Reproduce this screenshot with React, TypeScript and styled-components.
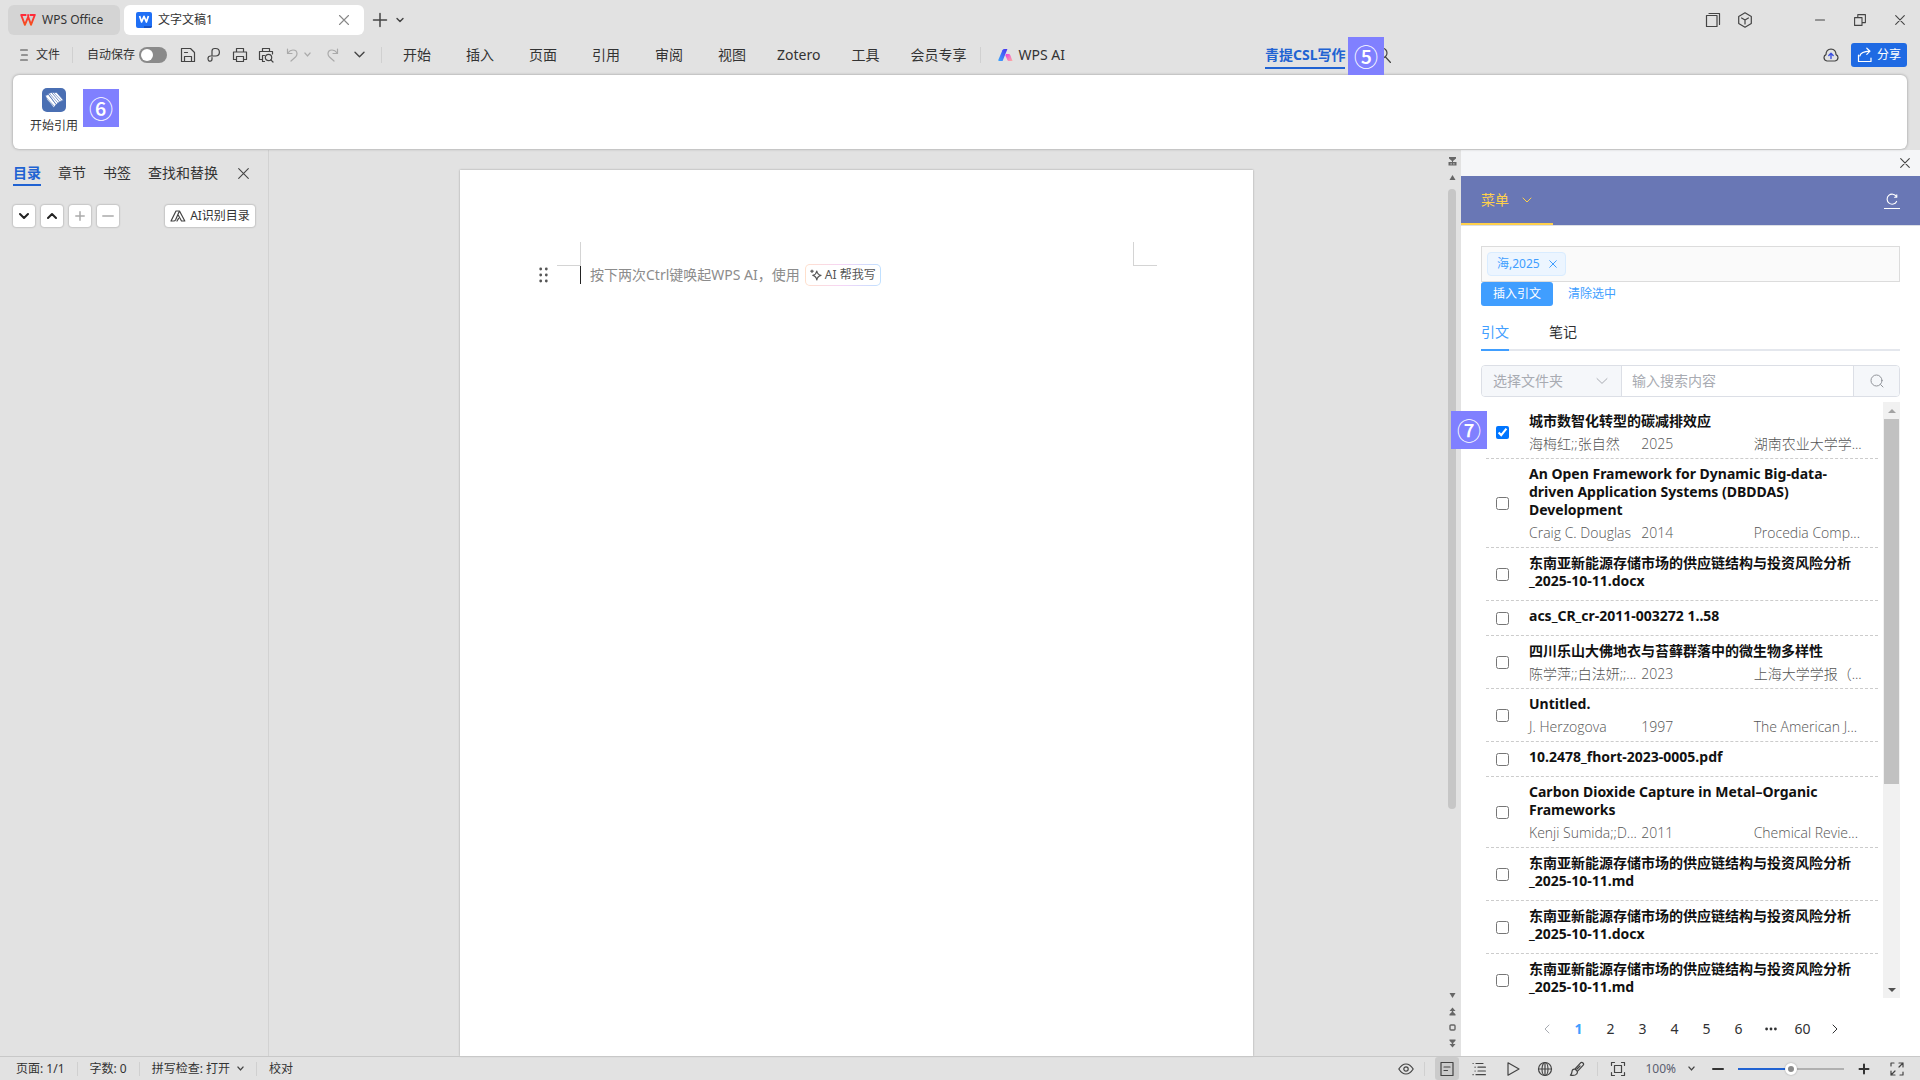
import React from "react";
import styled, { createGlobalStyle, css } from "styled-components";

const GlobalStyle = createGlobalStyle`
  *, *::before, *::after { box-sizing: border-box; }
  body {
    margin: 0;
    background: #e2e2e2;
    color: #333;
    font-family: "Noto Sans", "Noto Sans CJK SC", sans-serif;
    font-size: 14px;
    line-height: 20px;
  }
  button, input, select { font: inherit; color: inherit; }
  button { padding: 0; border: 0; background: none; cursor: pointer; }
  h1, p, ul { margin: 0; padding: 0; }
  svg { display: block; flex: none; }
`;

/* ---------- icons ---------- */

type IconProps = {
  children: React.ReactNode;
  w?: number;
  h?: number;
  color?: string;
  weight?: number;
};

const Icon = ({ children, w = 16, h = w, color = "#444", weight = 1.2 }: IconProps) => (
  <svg
    width={w}
    height={h}
    viewBox={`0 0 ${w} ${h}`}
    fill="none"
    stroke={color}
    strokeWidth={weight}
    strokeLinecap="round"
    strokeLinejoin="round"
    aria-hidden="true"
  >
    {children}
  </svg>
);

const Chevron = ({ w = 8, color = "#444", weight = 1.4, up = false }: { w?: number; color?: string; weight?: number; up?: boolean }) => (
  <Icon w={w} h={w} color={color} weight={weight}>
    <path d={up ? `M1 ${w * 0.7}L${w / 2} ${w * 0.3}L${w - 1} ${w * 0.7}` : `M1 ${w * 0.3}L${w / 2} ${w * 0.7}L${w - 1} ${w * 0.3}`} />
  </Icon>
);

const Cross = ({ w = 10, color = "#444", weight = 1.1 }: { w?: number; color?: string; weight?: number }) => (
  <Icon w={w} color={color} weight={weight}>
    <path d={`M.7 .7L${w - 0.7} ${w - 0.7}M${w - 0.7} .7L.7 ${w - 0.7}`} />
  </Icon>
);

const WpsLogo = () => (
  <svg width="16" height="12" viewBox="0 0 16 12" aria-hidden="true">
    <defs>
      <linearGradient id="wpsRed" x1="0" y1="0" x2="0" y2="1">
        <stop offset="0" stopColor="#ff2a3a" />
        <stop offset="1" stopColor="#f5521d" />
      </linearGradient>
    </defs>
    <path
      fill="none"
      stroke="url(#wpsRed)"
      strokeWidth="1.9"
      strokeLinejoin="round"
      d="M6.4 1H1.2L4.9 10.8L8.2 2.9L11 10.8L14.8 1H9.6M7.2 1.2H9"
    />
  </svg>
);

const WriterLogo = () => (
  <svg width="16" height="16" viewBox="0 0 16 16" aria-hidden="true">
    <rect width="16" height="16" rx="2" fill="#1f6ff5" />
    <path d="M8 16V14H16A2 2 0 0 1 14 16Z" fill="#1450c4" />
    <path d="M3.6 4L5.6 10L8 4.4L10.4 10L12.4 4" fill="none" stroke="#fff" strokeWidth="1.7" strokeLinejoin="round" />
  </svg>
);

const BooksLogo = () => (
  <svg width="24" height="24" viewBox="0 0 24 24" aria-hidden="true">
    <rect width="24" height="24" rx="5" fill="#4a6fb3" />
    <g fill="#fff" stroke="#4a6fb3" strokeWidth=".7" strokeLinejoin="round">
      <path d="M3.4 7.6L6.4 6.4L14.2 16.6L11.8 19.6L5 11.6Z" />
      <path d="M6.2 5.8L10 4.2L18 13.6L14.2 16.6Z" />
      <path d="M9.6 4.4L14.8 4.6L21.4 12.2L17.6 14Z" />
    </g>
    <path d="M4.6 9.8L12 18M8 6L16 15.2M12 5L19.6 13" stroke="#4a6fb3" strokeWidth=".6" />
  </svg>
);

const AiLogo = () => (
  <svg width="15" height="12" viewBox="0 0 15 12" aria-hidden="true">
    <defs>
      <linearGradient id="aiBlue" x1="0" y1="1" x2="1" y2="0">
        <stop offset="0" stopColor="#38a8ff" />
        <stop offset="1" stopColor="#4a2ef0" />
      </linearGradient>
      <linearGradient id="aiPink" x1="0" y1="0" x2="1" y2="1">
        <stop offset="0" stopColor="#e83ae0" />
        <stop offset="1" stopColor="#ffb0a0" />
      </linearGradient>
    </defs>
    <path d="M4.4 1.2Q5 0 6.4 0H9.4L4.6 12H1Q0 12 .4 10.8Z" fill="url(#aiBlue)" />
    <path d="M8 5H10.8Q11.8 5 12.2 6L14.6 12H10.8Q9.8 12 9.4 11L7.4 6.4Z" fill="url(#aiPink)" />
  </svg>
);

/* ---------- shared pieces ---------- */

const IconButton = styled.button<{ $w?: number; $h?: number; $on?: boolean }>`
  display: flex;
  align-items: center;
  justify-content: center;
  width: ${(p) => p.$w ?? 16}px;
  height: ${(p) => p.$h ?? 20}px;
  flex: none;
  border-radius: 3px;
  background: ${(p) => (p.$on ? "#cbcbcb" : "none")};
`;

const Divider = styled.span<{ $h?: number }>`
  width: 1px;
  height: ${(p) => p.$h ?? 16}px;
  flex: none;
  background: #d0d0d0;
`;

const Badge = styled.span<{ $left: number; $top: number }>`
  position: absolute;
  left: ${(p) => p.$left}px;
  top: ${(p) => p.$top}px;
  z-index: 5;
  display: flex;
  align-items: center;
  justify-content: center;
  width: 36px;
  height: 38px;
  background: #8080ff;
  color: #fff;
  font-family: "Noto Sans CJK SC", sans-serif;
  font-size: 24px;
  font-weight: 500;
  line-height: 38px;
`;

const Shell = styled.div`
  display: flex;
  flex-direction: column;
  height: 100vh;
  overflow: hidden;
`;

/* ---------- title bar ---------- */

const TitleBar = styled.header`
  display: flex;
  align-items: center;
  height: 36px;
  padding: 5px 12px 1px 8px;
  font-size: 12px;
`;

const FileTab = styled.button<{ $active?: boolean; $w: number }>`
  display: flex;
  align-items: center;
  gap: 6px;
  width: ${(p) => p.$w}px;
  height: 30px;
  margin-right: 4px;
  padding: 0 12px;
  border-radius: 6px;
  background: ${(p) => (p.$active ? "#fff" : "#d4d4d4")};
  color: #333;
`;

const FileName = styled.span`
  flex: 1;
  text-align: left;
  white-space: nowrap;
`;

const NewTab = styled.div`
  display: flex;
  align-items: center;
  gap: 8px;
  margin-left: 4px;
`;

const WindowTools = styled.div`
  display: flex;
  align-items: center;
  gap: 16px;
  margin-left: auto;
`;

const WindowButtons = styled.div`
  display: flex;
  gap: 24px;
  margin-left: 59px;
`;

/* ---------- menu bar ---------- */

const MenuBar = styled.div`
  display: flex;
  align-items: center;
  height: 39px;
  padding: 0 13px 2px 20px;
  font-size: 12px;
`;

const FileMenu = styled.button`
  display: flex;
  align-items: center;
  gap: 8px;
  margin-right: 12px;
`;

const AutoSave = styled.label`
  display: flex;
  align-items: center;
  gap: 4px;
  margin: 0 13px 0 14px;
`;

const Toggle = styled.input`
  appearance: none;
  display: flex;
  align-items: center;
  width: 28px;
  height: 16px;
  margin: 0;
  padding: 0 2px;
  border-radius: 8px;
  background: #8a8a8a;

  &::before {
    content: "";
    width: 12px;
    height: 12px;
    border-radius: 6px;
    background: #fff;
  }
`;

const QuickTools = styled.div`
  display: flex;
  align-items: center;
  gap: 10px;
  margin-right: 14px;
`;

const UndoGroup = styled.div`
  display: flex;
  align-items: center;
  gap: 4px;
  margin-right: 4px;
`;

const RibbonTabs = styled.nav<{ $gap: number; $before: number; $after?: number }>`
  display: flex;
  align-items: center;
  gap: ${(p) => p.$gap}px;
  margin-left: ${(p) => p.$before}px;
  margin-right: ${(p) => p.$after ?? 0}px;
`;

const RibbonTab = styled.button<{ $active?: boolean }>`
  display: flex;
  align-items: center;
  gap: 5px;
  height: 28px;
  border-bottom: 2px solid transparent;
  border-top: 2px solid transparent;
  font-size: 14px;
  white-space: nowrap;
  ${(p) =>
    p.$active &&
    css`
      border-bottom-color: #2163d2;
      color: #2163d2;
      font-weight: 700;
    `}
`;

const AddinTabs = styled.div`
  position: relative;
  display: flex;
  align-items: center;
  gap: 30px;
  margin-left: 200px;
`;

const ShareGroup = styled.div`
  display: flex;
  align-items: center;
  gap: 12px;
  margin-left: auto;
`;

const ShareButton = styled.button`
  display: flex;
  align-items: center;
  gap: 4px;
  height: 24px;
  padding: 0 6px;
  border-radius: 3px;
  background: #1f6ae3;
  color: #fff;
`;

/* ---------- ribbon ---------- */

const Ribbon = styled.section`
  position: relative;
  z-index: 2;
  display: flex;
  align-items: flex-start;
  flex: none;
  height: 74px;
  margin: 0 13px 1px;
  padding: 13px 17px;
  border-radius: 6px;
  background: #fff;
  box-shadow: 0 0 3px rgba(0, 0, 0, 0.35);
`;

const RibbonCommand = styled.button`
  display: flex;
  flex-direction: column;
  align-items: center;
  gap: 5px;
  font-size: 12px;
  line-height: 18px;
`;

/* ---------- body ---------- */

const Body = styled.div`
  display: flex;
  flex: 1;
  min-height: 0;
`;

const Outline = styled.aside`
  flex: none;
  width: 269px;
  padding: 13px 13px 0;
  border-right: 1px solid #d2d2d2;
`;

const OutlineTabs = styled.div`
  display: flex;
  align-items: flex-start;
  gap: 17px;
`;

const OutlineTab = styled.button<{ $active?: boolean }>`
  padding-bottom: 1px;
  border-bottom: 2px solid ${(p) => (p.$active ? "#2163d2" : "transparent")};
  color: ${(p) => (p.$active ? "#2163d2" : "#333")};
  font-weight: ${(p) => (p.$active ? 700 : 400)};
`;

const OutlineTools = styled.div`
  display: flex;
  gap: 6px;
  margin-top: 19px;
`;

const ToolBox = styled.button`
  display: flex;
  align-items: center;
  justify-content: center;
  width: 22px;
  height: 22px;
  border-radius: 3px;
  background: #fff;
  box-shadow: 0 0 2px rgba(0, 0, 0, 0.4);
`;

const DetectButton = styled(ToolBox)`
  gap: 4px;
  width: 90px;
  margin-left: auto;
  font-size: 12px;
`;

const Canvas = styled.main`
  display: flex;
  justify-content: center;
  flex: 1;
  min-width: 0;
  padding: 20px 0 0 2px;
`;

const Paper = styled.article`
  flex: none;
  width: 793px;
  padding-top: 72px;
  background: #fff;
  box-shadow: 0 0 2px rgba(0, 0, 0, 0.3);
`;

const Margins = styled.div`
  display: flex;
  justify-content: space-between;
  padding: 0 96px 0 97px;
`;

const Corner = styled.span<{ $side: "left" | "right" }>`
  width: 24px;
  height: 24px;
  border-bottom: 1px solid #d4d4d4;
  border-${(p) => (p.$side === "left" ? "right" : "left")}: 1px solid #d4d4d4;
`;

const Line = styled.div`
  display: flex;
  align-items: center;
  height: 18px;
  padding-left: 79px;
  color: #8c8c8c;
  white-space: nowrap;
`;

const Caret = styled.span`
  width: 1px;
  height: 18px;
  margin: 0 9px 0 32px;
  background: #222;
`;

const WriteForMe = styled.button`
  display: flex;
  align-items: center;
  gap: 3px;
  height: 22px;
  margin-left: 5px;
  padding: 0 4px;
  border: 1px solid transparent;
  border-radius: 5px;
  background: linear-gradient(#fff, #fff) padding-box, linear-gradient(90deg, #ffe0cc, #f5d5f7, #bfe0ff) border-box;
  color: #555;
  font-size: 12px;
`;

const DocScroll = styled.div`
  display: flex;
  flex-direction: column;
  align-items: center;
  flex: none;
  width: 19px;
  padding: 7px 0 8px 1px;
`;

const DocTrack = styled.div`
  flex: 1;
  width: 8px;
  margin: 7px 0;
`;

const DocThumb = styled.div`
  height: 78%;
  border-radius: 4px;
  background: #c6c6c6;
`;

const DocSteps = styled.div`
  display: flex;
  flex-direction: column;
  align-items: center;
  gap: 7px;
`;

/* ---------- citation panel ---------- */

const Panel = styled.aside`
  position: relative;
  display: flex;
  flex-direction: column;
  flex: none;
  width: 459px;
  background: #fff;
`;

const PanelTop = styled.div`
  display: flex;
  align-items: center;
  justify-content: flex-end;
  height: 26px;
  padding: 0 7px;
  background: #f5f6f8;
`;

const PanelHeader = styled.div`
  display: flex;
  align-items: center;
  justify-content: space-between;
  height: 50px;
  padding-right: 20px;
  border-bottom: 1px solid #dcdfe6;
  background: #6977b5;
`;

const PanelMenu = styled.button`
  display: flex;
  align-items: center;
  gap: 13px;
  width: 92px;
  height: 49px;
  padding: 0 20px;
  border-bottom: 2px solid #ffd04b;
  color: #ffd04b;
`;

const RefreshLink = styled.a`
  display: flex;
  justify-content: center;
  width: 16px;
  padding-bottom: 3px;
  border-bottom: 1px solid #fff;
`;

const PanelContent = styled.div`
  display: flex;
  flex-direction: column;
  flex: 1;
  min-height: 0;
  padding: 20px 20px 0;
`;

const TagBox = styled.div`
  flex: none;
  display: flex;
  height: 36px;
  padding: 5px;
  border: 1px solid #dcdcdc;
  background: #fafafa;
`;

const Tag = styled.span`
  display: flex;
  align-items: center;
  gap: 9px;
  height: 24px;
  padding: 0 8px 0 9px;
  border: 1px solid #d9ecff;
  border-radius: 4px;
  background: #ecf5ff;
  color: #409eff;
  font-size: 12px;
`;

const Actions = styled.div`
  display: flex;
  align-items: center;
  gap: 15px;
  font-size: 12px;
`;

const PrimaryButton = styled.button`
  height: 24px;
  padding: 0 12px;
  border-radius: 3px;
  background: #409eff;
  color: #fff;
`;

const TextButton = styled.button`
  color: #409eff;
`;

const PanelTabs = styled.div`
  display: flex;
  gap: 40px;
  height: 39px;
  margin: 6px 0 14px;
  box-shadow: inset 0 -2px #e4e7ed;
`;

const PanelTab = styled.button<{ $active?: boolean }>`
  padding-top: 2px;
  border-bottom: 2px solid ${(p) => (p.$active ? "#409eff" : "transparent")};
  color: ${(p) => (p.$active ? "#409eff" : "#303133")};
`;

const SearchRow = styled.form`
  flex: none;
  display: flex;
  height: 32px;
  border: 1px solid #dcdfe6;
  border-radius: 4px;
  overflow: hidden;
`;

const FolderField = styled.label`
  position: relative;
  width: 140px;
  border-right: 1px solid #dcdfe6;
  background: #f5f7fa;

  svg {
    position: absolute;
    right: 13px;
    top: 9px;
    pointer-events: none;
  }
`;

const FolderSelect = styled.select`
  appearance: none;
  width: 100%;
  height: 30px;
  padding: 0 11px;
  border: 0;
  background: none;
  color: #a8abb2;
`;

const SearchInput = styled.input`
  flex: 1;
  min-width: 0;
  padding: 0 10px;
  border: 0;
  outline: 0;

  &::placeholder {
    color: #a8abb2;
  }
`;

const SearchButton = styled.button`
  display: flex;
  align-items: center;
  justify-content: center;
  width: 46px;
  border-left: 1px solid #dcdfe6;
  background: #f5f7fa;
`;

const ListArea = styled.div`
  display: flex;
  flex: 1;
  min-height: 0;
  margin-top: 5px;
`;

const RefList = styled.ul`
  flex: 1;
  min-width: 0;
  padding: 4px 5px 0;
  overflow: hidden;
  list-style: none;
`;

const RefItem = styled.li`
  border-bottom: 1px dashed #ccc;
`;

const RefLabel = styled.label`
  display: flex;
  align-items: center;
  gap: 20px;
  padding: 6px 12px 5px 10px;
`;

const RefCheck = styled.input`
  flex: none;
  width: 13px;
  height: 13px;
  margin: 0;
  accent-color: #0075ff;
`;

const RefText = styled.span`
  flex: 1;
  min-width: 0;
`;

const RefTitle = styled.span`
  display: block;
  margin-bottom: 5px;
  color: #111;
  font-weight: 700;
  line-height: 18px;
`;

const RefMeta = styled.span`
  display: grid;
  grid-template-columns: repeat(3, 1fr);
  color: #555;
  font-family: "Open Sans", "Noto Sans CJK SC", sans-serif;
  font-weight: 300;
  line-height: 18px;
`;

const RefCell = styled.span`
  white-space: nowrap;
`;

const Scrollbar = styled.div`
  display: flex;
  flex-direction: column;
  width: 17px;
  background: #f1f1f1;
`;

const ScrollEnd = styled.button`
  display: flex;
  align-items: center;
  justify-content: center;
  height: 17px;
`;

const ScrollTrack = styled.div`
  flex: 1;
  padding: 0 1px;
`;

const ScrollThumb = styled.div`
  height: 65%;
  background: #c1c1c1;
`;

const Pager = styled.nav`
  display: flex;
  justify-content: center;
  align-items: center;
  height: 58px;
  padding-top: 4px;
`;

const PageButton = styled.button<{ $active?: boolean }>`
  display: flex;
  align-items: center;
  justify-content: center;
  width: 32px;
  height: 32px;
  color: ${(p) => (p.$active ? "#409eff" : "#303133")};
  font-weight: ${(p) => (p.$active ? 700 : 400)};
`;

/* ---------- status bar ---------- */

const StatusBar = styled.footer`
  display: flex;
  align-items: center;
  flex: none;
  height: 24px;
  padding: 0 16px;
  border-top: 1px solid #c8c8c8;
  font-size: 12px;
`;

const StatusGroup = styled.div<{ $gap?: number; $before?: number }>`
  display: flex;
  align-items: center;
  gap: ${(p) => p.$gap ?? 12}px;
  margin-left: ${(p) => p.$before ?? 0}px;
`;

const StatusButton = styled.button`
  display: flex;
  align-items: center;
  gap: 7px;
`;

const ViewTools = styled(StatusGroup)`
  margin-left: auto;
`;

const ZoomButton = styled(StatusButton)`
  gap: 12px;
  margin: 0 17px 0 19px;
  color: #5a6070;
`;

const ZoomRange = styled.input`
  appearance: none;
  width: 106px;
  height: 12px;
  margin: 0 14px;
  background: linear-gradient(90deg, #2163d2 50%, #b0b0b0 50%) center / 100% 2px no-repeat;

  &::-webkit-slider-thumb {
    appearance: none;
    width: 12px;
    height: 12px;
    border: 3px solid #fff;
    border-radius: 6px;
    background: #8a8a8a;
    box-shadow: 0 0 2px rgba(0, 0, 0, 0.3);
  }
`;

/* ---------- data ---------- */

type Reference = { title: string; meta?: [string, string, string]; checked?: boolean };

const references: Reference[] = [
  { title: "城市数智化转型的碳减排效应", meta: ["海梅红;;张自然", "2025", "湖南农业大学学..."], checked: true },
  {
    title: "An Open Framework for Dynamic Big-data-driven Application Systems (DBDDAS) Development",
    meta: ["Craig C. Douglas", "2014", "Procedia Comp..."],
  },
  { title: "东南亚新能源存储市场的供应链结构与投资风险分析_2025-10-11.docx" },
  { title: "acs_CR_cr-2011-003272 1..58" },
  { title: "四川乐山大佛地衣与苔藓群落中的微生物多样性", meta: ["陈学萍;;白法妍;;...", "2023", "上海大学学报（..."] },
  { title: "Untitled.", meta: ["J. Herzogova", "1997", "The American J..."] },
  { title: "10.2478_fhort-2023-0005.pdf" },
  { title: "Carbon Dioxide Capture in Metal–Organic Frameworks", meta: ["Kenji Sumida;;D...", "2011", "Chemical Revie..."] },
  { title: "东南亚新能源存储市场的供应链结构与投资风险分析_2025-10-11.md" },
  { title: "东南亚新能源存储市场的供应链结构与投资风险分析_2025-10-11.docx" },
  { title: "东南亚新能源存储市场的供应链结构与投资风险分析_2025-10-11.md" },
];

const editTabs = ["开始", "插入", "页面", "引用", "审阅", "视图"];
const extraTabs = ["Zotero", "工具", "会员专享"];
const outlineTabs = ["目录", "章节", "书签", "查找和替换"];

const Header = () => (
  <TitleBar>
    <FileTab $w={112}>
      <WpsLogo />
      <FileName>WPS Office</FileName>
    </FileTab>
    <FileTab $w={240} $active>
      <WriterLogo />
      <FileName>文字文稿1</FileName>
      <Icon w={16} color="#888" weight={1.1}>
        <path d="M3.5 3.5L12.5 12.5M12.5 3.5L3.5 12.5" />
      </Icon>
    </FileTab>
    <NewTab>
      <IconButton aria-label="新建">
        <Icon w={16} weight={1.5}>
          <path d="M8 1.5V14.5M1.5 8H14.5" />
        </Icon>
      </IconButton>
      <IconButton $w={8} aria-label="标签列表">
        <Chevron w={8} />
      </IconButton>
    </NewTab>
    <WindowTools>
      <IconButton aria-label="窗口列表">
        <Icon>
          <path d="M1.5 3.5H12V14.5H1.5Z" />
          <path d="M4 1.5H14.5V12.5" />
        </Icon>
      </IconButton>
      <IconButton aria-label="应用">
        <Icon>
          <path d="M8 .8L14.3 4.4V11.6L8 15.2L1.7 11.6V4.4ZM4.6 6L8 8L11.4 6M8 8V12" />
        </Icon>
      </IconButton>
    </WindowTools>
    <WindowButtons>
      <IconButton aria-label="最小化">
        <Icon w={10} weight={1.1}><path d="M.5 5H9.5" /></Icon>
      </IconButton>
      <IconButton aria-label="还原">
        <Icon w={12} weight={1.1}><path d="M.6 3.6H8V11.4H.6ZM3.8 3.6V.6H11.4V8.6H8" /></Icon>
      </IconButton>
      <IconButton aria-label="关闭">
        <Cross />
      </IconButton>
    </WindowButtons>
  </TitleBar>
);

const Menus = () => (
  <MenuBar>
    <FileMenu>
      <Icon w={8} h={12} weight={1.1}>
        <path d="M.6 1H7.4M1.6 6H7.4M.6 11H7.4" />
      </Icon>
      文件
    </FileMenu>
    <Divider />
    <AutoSave>
      自动保存
      <Toggle type="checkbox" />
    </AutoSave>
    <QuickTools>
      <IconButton aria-label="保存">
        <Icon>
          <path d="M1.5 1.5H10.5L14.5 5.5V14.5H1.5ZM4.5 14.2V9.5H11.5V14.2M4.5 5.5H7.5" />
        </Icon>
      </IconButton>
      <IconButton aria-label="输出为PDF">
        <Icon>
          <path d="M6 8V4Q6 1.5 8.6 1.5H9.6Q13.4 1.5 13.4 5.2T9.6 9H4.6Q2 9 2 11.6T4.2 14.2Q6 14.2 6 12V10.6" />
        </Icon>
      </IconButton>
      <IconButton aria-label="打印">
        <Icon>
          <path d="M4.5 5V1.5H11.5V5M4.5 12.5H1.5V5H14.5V12.5H11.5M4.5 9.5H11.5V14.5H4.5Z" />
        </Icon>
      </IconButton>
      <IconButton aria-label="打印预览">
        <Icon>
          <path d="M4.5 4.5V1.5H11.5V4.5M4.5 12.5H1.5V4.5H14.5V7M6.5 14.5H4.5V8.5H6.5" />
          <circle cx="10.5" cy="10.5" r="3.2" />
          <path d="M12.8 12.8L15 15" />
        </Icon>
      </IconButton>
      <UndoGroup>
        <IconButton aria-label="撤销">
          <Icon color="#aaa">
            <path d="M3.5 2V6.5H8M3.8 6Q6 3 9 3Q13 3 13 6.8Q13 8.6 11.5 10L7 14" />
          </Icon>
        </IconButton>
        <Chevron w={7} color="#aaa" />
      </UndoGroup>
      <IconButton aria-label="恢复">
        <Icon color="#aaa">
          <path d="M12.5 2V6.5H8M12.2 6Q10 3 7 3Q3 3 3 6.8Q3 8.6 4.5 10L9 14" />
        </Icon>
      </IconButton>
      <IconButton aria-label="更多">
        <Chevron w={11} />
      </IconButton>
    </QuickTools>
    <Divider />
    <RibbonTabs $gap={35} $before={21}>
      {editTabs.map((name) => (
        <RibbonTab key={name}>{name}</RibbonTab>
      ))}
    </RibbonTabs>
    <RibbonTabs $gap={31} $before={31} $after={14}>
      {extraTabs.map((name) => (
        <RibbonTab key={name}>{name}</RibbonTab>
      ))}
    </RibbonTabs>
    <Divider />
    <RibbonTabs $gap={31} $before={17}>
      <RibbonTab>
        <AiLogo />
        WPS AI
      </RibbonTab>
    </RibbonTabs>
    <AddinTabs>
      <RibbonTab $active>青提CSL写作</RibbonTab>
      <IconButton aria-label="搜索">
        <Icon>
          <circle cx="7" cy="6" r="5" />
          <path d="M10.5 10L15.5 15.5" />
        </Icon>
      </IconButton>
      <Badge $left={83} $top={-4}>⑤</Badge>
    </AddinTabs>
    <ShareGroup>
      <IconButton aria-label="云同步">
        <Icon>
          <path d="M4 14Q1 13.6 1 10.6Q1 8.4 3 7.6Q3 2.4 8 2Q13 2.4 13 7.6Q15 8.4 15 10.6Q15 13.6 12 14Z" />
          <path stroke="#3b4fe0" strokeWidth="1.4" d="M8 11.5V6.5M5.8 8.4L8 6.2L10.2 8.4" />
        </Icon>
      </IconButton>
      <ShareButton>
        <Icon color="#fff">
          <path d="M1.5 8V14.5H14V11M2.8 9Q4 4.5 12.6 4.2M9.8 1.2L13 4.2L9.8 7.4" />
        </Icon>
        分享
      </ShareButton>
    </ShareGroup>
  </MenuBar>
);

const OutlinePane = () => (
  <Outline>
    <OutlineTabs>
      {outlineTabs.map((name, i) => (
        <OutlineTab key={name} $active={i === 0}>{name}</OutlineTab>
      ))}
      <IconButton aria-label="关闭导航">
        <Cross w={11} />
      </IconButton>
    </OutlineTabs>
    <OutlineTools>
      <ToolBox aria-label="展开"><Chevron w={10} color="#222" weight={2} /></ToolBox>
      <ToolBox aria-label="收起"><Chevron w={10} color="#222" weight={2} up /></ToolBox>
      <ToolBox aria-label="增加">
        <Icon w={10} color="#aaa" weight={1.5}><path d="M5 .8V9.2M.8 5H9.2" /></Icon>
      </ToolBox>
      <ToolBox aria-label="减少">
        <Icon w={12} color="#aaa" weight={1.5}><path d="M.8 6H11.2" /></Icon>
      </ToolBox>
      <DetectButton>
        <Icon w={16} h={12}>
          <path d="M1 11L6 1H9.5L14.8 11H11.5L8.5 5.5M1 11H3.8Q5 11 5.6 9.8L9 2" />
          <path d="M7 11L8.6 8.4" />
        </Icon>
        AI识别目录
      </DetectButton>
    </OutlineTools>
  </Outline>
);

const DocumentView = () => (
  <>
    <Canvas>
      <Paper>
        <Margins>
          <Corner $side="left" />
          <Corner $side="right" />
        </Margins>
        <Line>
          <svg width="9" height="16" viewBox="0 0 9 16" fill="#555" aria-hidden="true">
            {[2, 8, 14].map((y) => (
              <React.Fragment key={y}>
                <circle cx="1.7" cy={y} r="1.4" />
                <circle cx="7.3" cy={y} r="1.4" />
              </React.Fragment>
            ))}
          </svg>
          <Caret />
          <span>按下两次Ctrl键唤起WPS AI，使用</span>
          <WriteForMe>
            <Icon w={12} color="#555">
              <path d="M6.8 2Q7.4 5.6 11 6.4Q7.4 7.2 6.8 11Q6.2 7.2 2.8 6.4Q6.2 5.6 6.8 2ZM2 1V3.4M.8 2.2H3.2" />
            </Icon>
            AI 帮我写
          </WriteForMe>
        </Line>
      </Paper>
    </Canvas>
    <DocScroll>
      <DocSteps>
        <svg width="9" height="9" viewBox="0 0 9 9" fill="#666" aria-hidden="true">
          <path d="M1 0H8V1.5L5 4V5H8.5V8.5H.5V5H4V4L1 1.5ZM2.6 6.2V7.4H3.6V6.2ZM5.4 6.2V7.4H6.4V6.2Z" fillRule="evenodd" />
        </svg>
        <svg width="7" height="9" viewBox="0 0 7 9" fill="#666" aria-hidden="true"><path d="M.5 7L3.5 2L6.5 7Z" /></svg>
      </DocSteps>
      <DocTrack>
        <DocThumb />
      </DocTrack>
      <DocSteps>
        <svg width="7" height="9" viewBox="0 0 7 9" fill="#666" aria-hidden="true"><path d="M.5 2H6.5L3.5 7Z" /></svg>
        <svg width="7" height="9" viewBox="0 0 7 9" fill="#666" aria-hidden="true"><path d="M.5 4L3.5 .5L6.5 4H4.2V5L6.5 7.2V8.5H.5V7.2L2.8 5V4Z" /></svg>
        <svg width="7" height="9" viewBox="0 0 7 9" aria-hidden="true"><rect x="1" y="2" width="5" height="5" rx="1" fill="none" stroke="#666" strokeWidth="1.4" /></svg>
        <svg width="7" height="9" viewBox="0 0 7 9" fill="#666" aria-hidden="true"><path d="M.5 .5H6.5V1.8L4.2 4V5H6.5L3.5 8.5L.5 5H2.8V4L.5 1.8Z" /></svg>
      </DocSteps>
    </DocScroll>
  </>
);

const CitationPanel = () => (
  <Panel>
    <PanelTop>
      <IconButton aria-label="关闭面板">
        <Cross w={10} />
      </IconButton>
    </PanelTop>
    <PanelHeader>
      <PanelMenu>
        菜单
        <Chevron w={10} color="#ffd04b" weight={1} />
      </PanelMenu>
      <RefreshLink href="#" aria-label="刷新">
        <Icon w={12} color="#fff" weight={1.1}>
          <path d="M10.6 8.4A5 5 0 1 1 10.4 3.6M10.8 1.8V4.2H8.6" />
        </Icon>
      </RefreshLink>
    </PanelHeader>
    <PanelContent>
      <TagBox>
        <Tag>
          海,2025
          <IconButton $w={8} aria-label="移除">
            <Cross w={8} color="#409eff" weight={1} />
          </IconButton>
        </Tag>
      </TagBox>
      <Actions>
        <PrimaryButton>插入引文</PrimaryButton>
        <TextButton>清除选中</TextButton>
      </Actions>
      <PanelTabs>
        <PanelTab $active>引文</PanelTab>
        <PanelTab>笔记</PanelTab>
      </PanelTabs>
      <SearchRow>
        <FolderField>
          <FolderSelect aria-label="选择文件夹">
            <option>选择文件夹</option>
          </FolderSelect>
          <Chevron w={12} color="#a8abb2" weight={1} />
        </FolderField>
        <SearchInput aria-label="搜索" placeholder="输入搜索内容" />
        <SearchButton type="button" aria-label="搜索">
          <Icon w={14} color="#909399" weight={1}>
            <circle cx="6.5" cy="6.5" r="5.5" />
            <path d="M10.6 10.6L13 13" />
          </Icon>
        </SearchButton>
      </SearchRow>
      <ListArea>
        <RefList>
          {references.map((r, i) => (
            <RefItem key={i}>
              <RefLabel>
                <RefCheck type="checkbox" defaultChecked={r.checked} />
                <RefText>
                  <RefTitle>{r.title}</RefTitle>
                  {r.meta && (
                    <RefMeta>
                      {r.meta.map((m) => (
                        <RefCell key={m}>{m}</RefCell>
                      ))}
                    </RefMeta>
                  )}
                </RefText>
              </RefLabel>
            </RefItem>
          ))}
        </RefList>
        <Scrollbar>
          <ScrollEnd aria-label="向上滚动">
            <svg width="8" height="4" viewBox="0 0 8 4" fill="#a3a3a3"><path d="M0 4L4 0L8 4Z" /></svg>
          </ScrollEnd>
          <ScrollTrack>
            <ScrollThumb />
          </ScrollTrack>
          <ScrollEnd aria-label="向下滚动">
            <svg width="8" height="4" viewBox="0 0 8 4" fill="#505050"><path d="M0 0L4 4L8 0Z" /></svg>
          </ScrollEnd>
        </Scrollbar>
      </ListArea>
      <Pager>
        <PageButton aria-label="上一页">
          <Icon w={10} color="#a8abb2" weight={1}><path d="M7 1L3 5L7 9" /></Icon>
        </PageButton>
        {["1", "2", "3", "4", "5", "6"].map((n) => (
          <PageButton key={n} $active={n === "1"}>{n}</PageButton>
        ))}
        <PageButton aria-label="更多页">
          <svg width="12" height="4" viewBox="0 0 12 4" fill="#303133">
            <circle cx="1.6" cy="2" r="1.4" />
            <circle cx="6" cy="2" r="1.4" />
            <circle cx="10.4" cy="2" r="1.4" />
          </svg>
        </PageButton>
        <PageButton>60</PageButton>
        <PageButton aria-label="下一页">
          <Icon w={10} color="#303133" weight={1}><path d="M3 1L7 5L3 9" /></Icon>
        </PageButton>
      </Pager>
    </PanelContent>
    <Badge $left={-10} $top={261}>⑦</Badge>
  </Panel>
);

const Status = () => (
  <StatusBar>
    <StatusGroup>
      <StatusButton>页面: 1/1</StatusButton>
      <Divider $h={14} />
      <StatusButton>字数: 0</StatusButton>
      <Divider $h={14} />
      <StatusButton>
        拼写检查: 打开
        <Chevron w={7} />
      </StatusButton>
      <Divider $h={14} />
      <StatusButton>校对</StatusButton>
    </StatusGroup>
    <ViewTools $gap={10}>
      <IconButton aria-label="护眼模式">
        <Icon><path d="M.8 8Q4 3 8 3T15.2 8Q12 13 8 13T.8 8Z" /><circle cx="8" cy="8" r="2.2" /></Icon>
      </IconButton>
      <Divider $h={14} />
      <IconButton $w={24} $h={23} $on aria-label="页面视图">
        <Icon><path d="M2 1.5H14V14.5H2ZM5 6H11M5 9.5H8.5" /></Icon>
      </IconButton>
    </ViewTools>
    <StatusGroup $gap={16} $before={10}>
      <IconButton $w={20} aria-label="大纲">
        <Icon w={14}><path d="M1 1.5H1.2M4 1.5H11M3 5.2H3.2M6 5.2H13.4M3 9H3.2M6 9H13.4M1 12.7H1.2M4 12.7H13.4" /></Icon>
      </IconButton>
      <IconButton aria-label="阅读">
        <Icon><path d="M3 1.8L14 8L3 14.2Z" /></Icon>
      </IconButton>
      <IconButton aria-label="Web版式">
        <Icon><circle cx="8" cy="8" r="6.5" /><ellipse cx="8" cy="8" rx="3" ry="6.5" /><path d="M1.5 8H14.5M8 1.5V14.5" /></Icon>
      </IconButton>
      <IconButton aria-label="写作模式">
        <Icon><path d="M6 8L11.6 1.8Q12.8 .8 14 2T14 4.4L8.4 10.4ZM5.8 8.2Q3.2 8 3 10.6Q2.8 13 1.4 14.2Q6 15 7.6 13Q8.8 11.6 8.2 10.4M11 5L8 8" /></Icon>
      </IconButton>
    </StatusGroup>
    <StatusGroup $gap={12} $before={12}>
      <Divider $h={14} />
      <IconButton aria-label="最佳显示比例">
        <Icon><path d="M1.5 4.5V1.5H4.5M11.5 1.5H14.5V4.5M14.5 11.5V14.5H11.5M4.5 14.5H1.5V11.5M4.5 4.5H11.5V11.5H4.5Z" /></Icon>
      </IconButton>
    </StatusGroup>
    <ZoomButton>
      <span>100%</span>
      <Chevron w={7} />
    </ZoomButton>
    <IconButton $w={12} aria-label="缩小">
      <Icon w={12} weight={2} color="#333"><path d="M1 6H11" /></Icon>
    </IconButton>
    <ZoomRange type="range" min={0} max={100} defaultValue={50} aria-label="缩放" />
    <IconButton $w={12} aria-label="放大">
      <Icon w={12} weight={2} color="#333"><path d="M1.5 6H10.5M6 1.5V10.5" /></Icon>
    </IconButton>
    <StatusGroup $before={20}>
      <IconButton $w={14} aria-label="全屏">
        <Icon w={14}><path d="M9 1H13V5M13 1L9 5M5 13H1V9M1 13L5 9M1 4V1H4M13 10V13H10" /></Icon>
      </IconButton>
    </StatusGroup>
  </StatusBar>
);

export default function App() {
  return (
    <Shell>
      <GlobalStyle />
      <Header />
      <Menus />
      <Ribbon>
        <RibbonCommand>
          <BooksLogo />
          开始引用
        </RibbonCommand>
        <Badge $left={70} $top={14}>⑥</Badge>
      </Ribbon>
      <Body>
        <OutlinePane />
        <DocumentView />
        <CitationPanel />
      </Body>
      <Status />
    </Shell>
  );
}
